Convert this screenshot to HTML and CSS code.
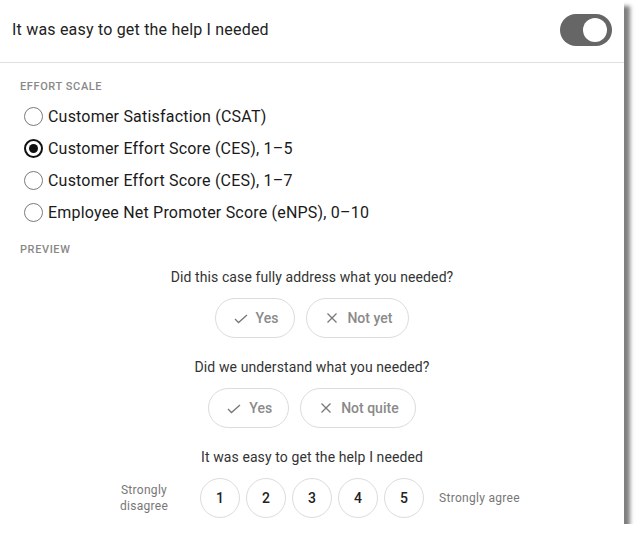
FILE: index.html
```html
<!DOCTYPE html>
<html>
<head>
<meta charset="utf-8">
<link rel="stylesheet" href="styles.css">
</head>
<body>
<div class="panel">
  <div class="header">
    <div class="title">It was easy to get the help I needed</div>
    <div class="toggle"><span class="knob"></span></div>
  </div>
  <div class="section">
    <div class="label">EFFORT SCALE</div>
    <div class="radios">
      <div class="radio"><span class="circle"></span><span>Customer Satisfaction (CSAT)</span></div>
      <div class="radio"><span class="circle on"></span><span>Customer Effort Score (CES), 1–5</span></div>
      <div class="radio"><span class="circle"></span><span>Customer Effort Score (CES), 1–7</span></div>
      <div class="radio"><span class="circle"></span><span>Employee Net Promoter Score (eNPS), 0–10</span></div>
    </div>
    <div class="label preview-label">PREVIEW</div>
    <div class="preview">
      <div class="question">Did this case fully address what you needed?</div>
      <div class="buttons">
        <div class="pill"><svg class="ic" viewBox="0 0 18 18"><path d="M3 10 L6.5 13.5 L15 6" /></svg><span>Yes</span></div>
        <div class="pill"><svg class="ic" viewBox="0 0 18 18"><path d="M4.5 4.5 L13.5 13.5 M13.5 4.5 L4.5 13.5" /></svg><span>Not yet</span></div>
      </div>
      <div class="question">Did we understand what you needed?</div>
      <div class="buttons">
        <div class="pill"><svg class="ic" viewBox="0 0 18 18"><path d="M3 10 L6.5 13.5 L15 6" /></svg><span>Yes</span></div>
        <div class="pill"><svg class="ic" viewBox="0 0 18 18"><path d="M4.5 4.5 L13.5 13.5 M13.5 4.5 L4.5 13.5" /></svg><span>Not quite</span></div>
      </div>
      <div class="question">It was easy to get the help I needed</div>
      <div class="scale">
        <div class="scale-label">Strongly<br>disagree</div>
        <div class="nums">
          <div class="num">1</div>
          <div class="num">2</div>
          <div class="num">3</div>
          <div class="num">4</div>
          <div class="num">5</div>
        </div>
        <div class="scale-label nowrap">Strongly agree</div>
      </div>
    </div>
  </div>
</div>
</body>
</html>
```

FILE: styles.css
```css
html, body {
  margin: 0;
  padding: 0;
  background: #fff;
}
body {
  font-family: Roboto, "Liberation Sans", sans-serif;
  color: #333;
}
.panel {
  width: 624px;
  height: 524px;
  background: #fff;
  box-shadow: 6px 6px 4px rgba(0, 0, 0, 0.5);
  box-sizing: border-box;
}
.header {
  height: 63px;
  box-sizing: border-box;
  display: flex;
  align-items: center;
  justify-content: space-between;
  padding: 0 12px 2px 12px;
  border-bottom: 1px solid #e0e0e0;
}
.title {
  font-size: 16px;
  letter-spacing: 0.2px;
  color: #222;
  margin-top: -2px;
}
.toggle {
  width: 52px;
  height: 32px;
  border-radius: 16px;
  background: #666;
  display: flex;
  align-items: center;
  justify-content: flex-end;
  padding-right: 5px;
  box-sizing: border-box;
}
.knob {
  width: 24px;
  height: 24px;
  border-radius: 50%;
  background: #fff;
}
.section {
  padding: 0 20px;
}
.label {
  font-size: 11px;
  line-height: 14px;
  font-weight: 500;
  letter-spacing: 0.6px;
  color: #888;
  margin-top: 17px;
}
.radios {
  margin-top: 6px;
  padding-left: 4px;
}
.radio {
  height: 32px;
  display: flex;
  align-items: center;
  gap: 5px;
  font-size: 16px;
  letter-spacing: 0.2px;
  color: #1a1a1a;
}
.circle {
  width: 19px;
  height: 19px;
  box-sizing: border-box;
  border: 1.5px solid #7a7a7a;
  border-radius: 50%;
  display: flex;
  align-items: center;
  justify-content: center;
}
.circle.on {
  border: 2px solid #111;
}
.circle.on::after {
  content: "";
  width: 9px;
  height: 9px;
  border-radius: 50%;
  background: #111;
}
.preview-label {
  margin-top: 15px;
}
.preview {
  display: flex;
  flex-direction: column;
  align-items: center;
  margin: 0 -20px;
}
.question {
  font-size: 14px;
  line-height: 20px;
  letter-spacing: 0.1px;
  color: #333;
  margin-top: 19px;
  margin-bottom: 11px;
}
.question:first-child {
  margin-top: 10px;
}
.buttons {
  display: flex;
  gap: 11px;
}
.pill {
  height: 40px;
  box-sizing: border-box;
  border: 1px solid #dcdcdc;
  border-radius: 20px;
  padding: 0 16px 0 16px;
  display: flex;
  align-items: center;
  gap: 6px;
  font-size: 14px;
  font-weight: 500;
  color: #8a8a8a;
}
.ic {
  width: 18px;
  height: 18px;
  fill: none;
  stroke: #777;
  stroke-width: 1.3;
}
.scale {
  display: flex;
  align-items: center;
  gap: 16px;
}
.scale-label {
  width: 80px;
  text-align: center;
  font-size: 12px;
  line-height: 16px;
  letter-spacing: 0.3px;
  color: #777;
}
.scale-label.nowrap {
  white-space: nowrap;
  text-align: left;
  margin-left: -1px;
  margin-right: 1px;
}
.nums {
  display: flex;
  gap: 6px;
}
.num {
  width: 40px;
  height: 40px;
  box-sizing: border-box;
  border: 1px solid #dcdcdc;
  border-radius: 50%;
  display: flex;
  align-items: center;
  justify-content: center;
  font-size: 14px;
  font-weight: 500;
  color: #222;
}
```
